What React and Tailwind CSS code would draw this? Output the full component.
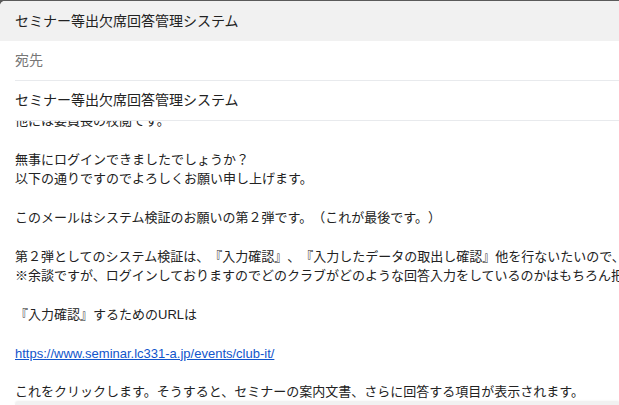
import React from "react";

const font = "font-['Liberation_Sans','Noto_Sans_CJK_JP',sans-serif]";

// Mail body lines; "" is an empty line
const bodyLines = [
  "他には委員長の校閲です。",
  "",
  "無事にログインできましたでしょうか？",
  "以下の通りですのでよろしくお願い申し上げます。",
  "",
  "このメールはシステム検証のお願いの第２弾です。（これが最後です。）",
  "",
  "第２弾としてのシステム検証は、『入力確認』、『入力したデータの取出し確認』他を行ないたいので、よろしくお願いします。",
  "※余談ですが、ログインしておりますのでどのクラブがどのような回答入力をしているのかはもちろん把握できます。",
  "",
  "『入力確認』するためのURLは",
  "",
  "__link__",
  "",
  "これをクリックします。そうすると、セミナーの案内文書、さらに回答する項目が表示されます。",
];

const App = () => {
  return (
    <div className={`w-[619px] h-[405px] bg-[#5a5a5a] overflow-hidden [text-spacing-trim:space-all] ${font}`}>
      <div className="mt-px h-[404px] flex flex-col bg-white rounded-tl-[5px] overflow-hidden">
        {/* Title bar */}
        <div className="h-10 flex-shrink-0 flex items-center px-[15px] bg-[#f1f1f1] text-[14px] text-[#222]">
          セミナー等出欠席回答管理システム
        </div>

        {/* To */}
        <div className="h-10 flex-shrink-0 flex items-center ml-[15px] border-b border-[#e8eaed] text-[14px] text-[#777]">
          宛先
        </div>

        {/* Subject */}
        <div className="h-10 flex-shrink-0 flex items-center ml-[15px] border-b border-[#e8eaed] text-[14px] text-[#222]">
          セミナー等出欠席回答管理システム
        </div>

        {/* Body (scrolled) */}
        <div className="flex-1 overflow-hidden">
          <div className="-mt-[10px] pl-[15px] text-[13px] leading-[19.4px] text-[#222] whitespace-nowrap">
            {bodyLines.map((line, i) =>
              line === "__link__" ? (
                <div key={i} className="h-[19.4px]">
                  <a href="#" className="text-[#15c] underline">
                    https://www.seminar.lc331-a.jp/events/club-it/
                  </a>
                </div>
              ) : (
                <div key={i} className="h-[19.4px]">
                  {line}
                </div>
              )
            )}
          </div>
        </div>

        {/* Reply box edge */}
        <div className="h-[3px] flex-shrink-0 ml-[15px] bg-[#f1f1f1] rounded-tl-[6px] shadow-[0_-1px_2px_rgba(0,0,0,0.08)]" />
      </div>
    </div>
  );
};

export default App;
